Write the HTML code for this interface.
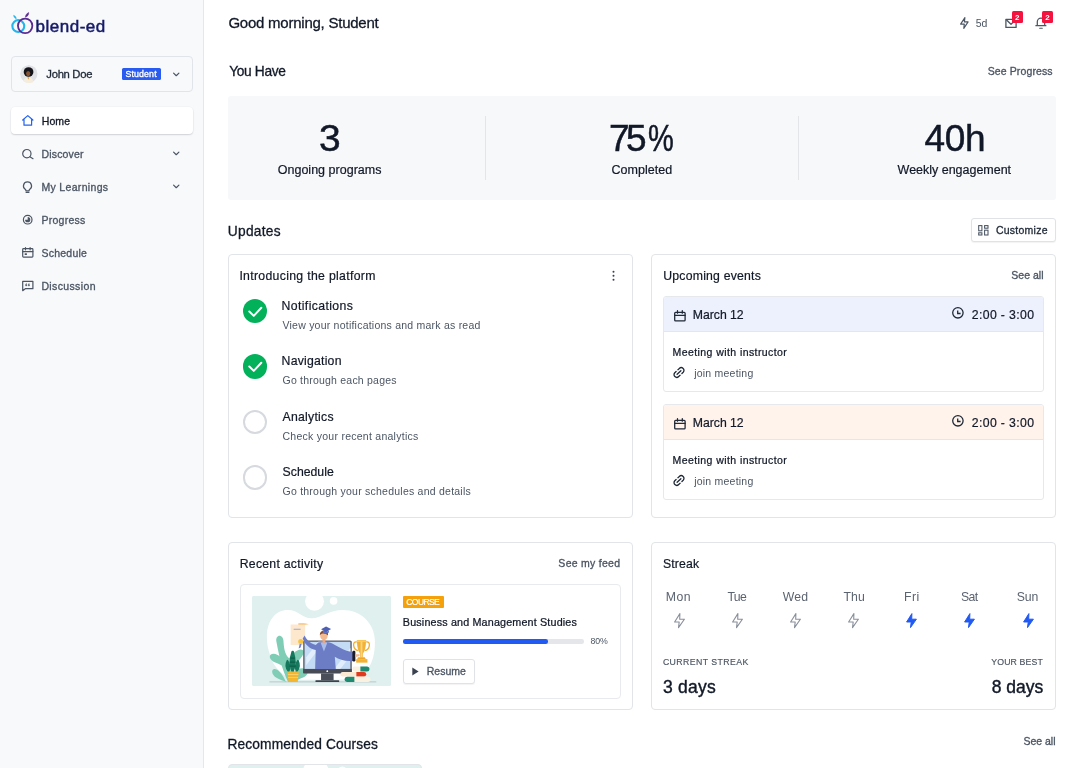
<!DOCTYPE html>
<html lang="en">
<head>
<meta charset="utf-8">
<title>blend-ed – Home</title>
<style>
*{box-sizing:border-box;margin:0;padding:0}
html,body{width:1080px;height:768px;overflow:hidden;background:#fff}
body{font-family:"Liberation Sans",Arial,sans-serif;color:#111827;position:relative;font-weight:400;will-change:transform}
a{color:inherit;text-decoration:none}
h1,h2,h3{font-weight:400;font-size:inherit}
svg{display:block;overflow:visible}
.abs{position:absolute}
.t{position:absolute;white-space:nowrap;line-height:1;display:block}
.md{-webkit-text-stroke:.32px currentColor}
.md2{-webkit-text-stroke:.2px currentColor}
.g6{color:#4b5563}
.g5{color:#5b6370}
/* ---------- sidebar ---------- */
#sidebar{position:absolute;left:0;top:0;width:204px;height:768px;background:#f8f9fb;border-right:1px solid #e5e7eb}
#logo{position:absolute;left:0;top:0;width:204px;height:46px}
#user{position:absolute;left:11px;top:56px;width:182px;height:36px;border:1px solid #e1e4e8;border-radius:4px}
#user .role{position:absolute;left:110.300px;top:11.300px;width:38.900px;height:11.900px;background:#2a5bf0;border-radius:1.500px}
nav .item{position:absolute;left:11px;width:182px;height:27px;border-radius:4px;color:#4b5563}
nav .item.active{background:#fff;color:#111827;box-shadow:0 1px 1.500px rgba(16,24,40,.16),0 0 0 .5px rgba(16,24,40,.03)}
/* ---------- main ---------- */
#main{position:absolute;left:204px;top:0;width:876px;height:768px}
#top{position:absolute;left:0;top:0;width:876px;height:46px}
.badge{position:absolute;width:11.200px;height:12px;background:#f4123f;border-radius:1.500px;color:#fff;font-weight:700}
#stats{position:absolute;left:24px;top:96px;width:828px;height:104px;background:#f7f8fa;border-radius:3px}
#stats .div{position:absolute;top:20px;width:1px;height:64px;background:#e3e5e9}
.btn{position:absolute;border:1px solid #dfe2e6;border-radius:3px;background:#fff;box-shadow:0 1px 1px rgba(16,24,40,.05)}
.card{position:absolute;border:1px solid #e1e4e8;border-radius:4px;background:#fff}
.dot{position:absolute;width:24.500px;height:24.500px;border-radius:50%}
.dot.on{background:#03b15a}
.dot.off{background:#fff;border:2px solid #d6d9de}
.ev{position:absolute;left:11px;width:381px;border:1px solid #e6e8ec;border-radius:3px;background:#fff;overflow:hidden}
.ev .hd{position:absolute;left:0;top:0;right:0;height:35px;border-bottom:1px solid #e3e6ea}
#recent .inner{position:absolute;left:11px;top:41px;width:381px;height:115px;border:1px solid #e8eaed;border-radius:4px;background:#fff}
#recent .thumb{position:absolute;left:11px;top:11px;width:139px;height:90px;border-radius:2px;overflow:hidden;background:#dff0ef}
#recent .tag{position:absolute;left:161.500px;top:11px;width:41.500px;height:12px;background:#f5a10b;border-radius:1px;color:#fff}
#recent .bar{position:absolute;left:161.500px;top:54px;width:181.500px;height:4.500px;border-radius:2.250px;background:#e4e6ea}
#recent .bar i{display:block;width:145.500px;height:4.500px;border-radius:2.250px;background:#2159f3}
</style>
</head>
<body>
<aside id="sidebar">
  <div id="logo">
    <svg class="abs" style="left:0;top:0" width="204" height="46" viewBox="0 0 204 46">
      <circle cx="18.300" cy="26.100" r="5.950" fill="none" stroke="#23b5ee" stroke-width="2.100"/>
      <ellipse cx="25.150" cy="25.850" rx="7.200" ry="7.300" fill="none" stroke="#5a2b93" stroke-width="1.800"/>
      <path d="M25.400 17.200C25.600 14.900 26.900 13.300 28.700 12.500C28.900 14.700 27.700 16.500 25.400 17.200Z" fill="#5a2b93" stroke="#5a2b93" stroke-width=".5" stroke-linejoin="round"/>
      <path d="M16.300 18.900C14.700 18.400 13.700 17.100 13.500 15.300C15.300 15.600 16.300 16.900 16.300 18.900Z" fill="#23b5ee" stroke="#23b5ee" stroke-width=".4" stroke-linejoin="round"/>
      <text id="t_logo" x="35.600" y="31.500" font-family="Liberation Sans, Arial, sans-serif" font-size="17" letter-spacing=".5" fill="#151b6b" stroke="#151b6b" stroke-width=".5">blend-ed</text>
    </svg>
  </div>
  <div id="user">
    <div class="abs" style="left:8.300px;top:8.300px;width:17.500px;height:17.500px;border-radius:50%;overflow:hidden"><svg width="17.500" height="17.500" viewBox="0 0 18 18"><circle cx="9" cy="9" r="9" fill="#e1e2e6"/><circle cx="8.800" cy="7.200" r="5" fill="#14141a"/><ellipse cx="8.400" cy="8.800" rx="2.200" ry="2.700" fill="#8a5230"/><path d="M3.200 18.500c.3-4.300 2.500-6 5.400-6s5.100 1.700 5.400 6z" fill="#f4ecdc"/><path d="M7.500 12.600h2l-.8 2.600z" fill="#e39a43"/></svg></div>
    <span class="t md" id="t_john" style="left:34.36px;top:12.00px;font-size:11.25px;letter-spacing:-0.303px;color:#1f2937">John Doe</span>
    <div class="role"></div>
    <span class="t md" id="t_role" style="left:113.46px;top:13.00px;font-size:8.75px;letter-spacing:0.158px;color:#fff">Student</span>
    <svg class="abs" style="left:158px;top:12px" width="14" height="10" viewBox="0 0 14 10"><path d="M3.600 4.100L6.250 6.700L8.900 4.100" fill="none" stroke="#4b5563" stroke-width="1.200" stroke-linecap="round" stroke-linejoin="round"/></svg>
  </div>
  <nav>
    <div class="item active" style="top:107px">
      <svg class="abs" style="left:10px;top:7px" width="14" height="14" viewBox="0 0 14 14"><path d="M1.700 6L6.800 1.600L11.900 6M3 5V11.200H10.600V5" fill="none" stroke="#2563eb" stroke-width="1.200" stroke-linecap="round" stroke-linejoin="round"/></svg>
      <span class="t md" id="t_nav1" style="left:30.86px;top:9.01px;font-size:10.5px;letter-spacing:0.037px">Home</span>
    </div>
    <div class="item" style="top:140px">
      <svg class="abs" style="left:10px;top:7px" width="14" height="14" viewBox="0 0 14 14"><circle cx="5.850" cy="6.650" r="4.150" fill="none" stroke="#4b5563" stroke-width="1.200"/><path d="M8.900 9.700L12 11.700" stroke="#4b5563" stroke-width="1.200" stroke-linecap="round"/></svg>
      <span class="t md" id="t_nav2" style="left:30.41px;top:9.01px;font-size:10.5px;letter-spacing:0.191px">Discover</span>
      <svg class="abs" style="left:158.700px;top:9px" width="14" height="10" viewBox="0 0 14 10"><path d="M3.600 3.100L6.250 5.700L8.900 3.100" fill="none" stroke="#4b5563" stroke-width="1.200" stroke-linecap="round" stroke-linejoin="round"/></svg>
    </div>
    <div class="item" style="top:173px">
      <svg class="abs" style="left:10px;top:7px" width="14" height="14" viewBox="0 0 14 14"><path d="M6.500 1.900a4 4 0 0 0-2.300 7.300c.45.350.7.800.7 1.300v.3h3.200v-.3c0-.5.250-.950.700-1.300A4 4 0 0 0 6.500 1.900z" fill="none" stroke="#4b5563" stroke-width="1.200" stroke-linejoin="round"/><path d="M5.100 12.300h2.800" stroke="#4b5563" stroke-width="1.300" stroke-linecap="round"/></svg>
      <span class="t md" id="t_nav3" style="left:30.41px;top:9.01px;font-size:10.5px;letter-spacing:0.332px">My Learnings</span>
      <svg class="abs" style="left:158.700px;top:9px" width="14" height="10" viewBox="0 0 14 10"><path d="M3.600 3.100L6.250 5.700L8.900 3.100" fill="none" stroke="#4b5563" stroke-width="1.200" stroke-linecap="round" stroke-linejoin="round"/></svg>
    </div>
    <div class="item" style="top:206px">
      <svg class="abs" style="left:10px;top:7px" width="14" height="14" viewBox="0 0 14 14"><circle cx="6.700" cy="6.700" r="4.300" fill="none" stroke="#4b5563" stroke-width="1.200"/><path d="M6.700 4.100V6.700H4.100A2.600 2.600 0 1 0 6.700 4.100z" fill="#4b5563"/></svg>
      <span class="t md" id="t_nav4" style="left:30.41px;top:9.01px;font-size:10.5px;letter-spacing:0.274px">Progress</span>
    </div>
    <div class="item" style="top:239px">
      <svg class="abs" style="left:10px;top:7px" width="14" height="14" viewBox="0 0 14 14"><rect x="1.700" y="2.700" width="10.200" height="8.400" rx=".8" fill="none" stroke="#4b5563" stroke-width="1.200"/><path d="M1.700 5.600h10.200M4.500 1.500v2.300M9.100 1.500v2.300" stroke="#4b5563" stroke-width="1.200" stroke-linecap="round"/><rect x="3.700" y="7.300" width="2.200" height="1.700" fill="#4b5563"/></svg>
      <span class="t md" id="t_nav5" style="left:30.41px;top:9.01px;font-size:10.5px;letter-spacing:0.248px">Schedule</span>
    </div>
    <div class="item" style="top:272px">
      <svg class="abs" style="left:10px;top:7px" width="14" height="14" viewBox="0 0 14 14"><path d="M1.700 2.300H11.900V9.700H4.300L1.700 11.700Z" fill="none" stroke="#4b5563" stroke-width="1.200" stroke-linejoin="round"/><path d="M4.600 7V5.600q0-.9.9-1.200v.7q-.3.200-.3.500h.6V7zM7.300 7V5.600q0-.9.900-1.200v.7q-.3.200-.3.500h.6V7z" fill="#4b5563" stroke="#4b5563" stroke-width=".3"/></svg>
      <span class="t md" id="t_nav6" style="left:30.41px;top:9.01px;font-size:10.5px;letter-spacing:0.367px">Discussion</span>
    </div>
  </nav>
</aside>
<main id="main">
  <header id="top">
    <h1 class="t md" id="t_hello" style="left:24.45px;top:15.01px;font-size:15px;letter-spacing:-0.242px;-webkit-text-stroke-width:.3px">Good morning, Student</h1>
    <svg class="abs" style="left:756.200px;top:17.300px" width="8.700" height="12" viewBox="0 0 8.700 12"><path d="M4.900 .6L.6 7.100H4.300L3.800 11.400L8.100 4.900H4.400Z" fill="none" stroke="#4b5563" stroke-width="1.150" stroke-linejoin="round"/></svg>
    <span class="t g6" id="t_5d" style="left:771.80px;top:18.00px;font-size:10.5px;letter-spacing:-0.240px">5d</span>
    <svg class="abs" style="left:801px;top:17.600px" width="13" height="11" viewBox="0 0 13 11"><path d="M.9 1.350H11.100V9.450H.9Z" fill="none" stroke="#4b5563" stroke-width="1.300" stroke-linejoin="round"/><path d="M1.300 1.700L6 6.200L10.800 1.700" fill="none" stroke="#4b5563" stroke-width="1.300" stroke-linejoin="round"/></svg>
    <span class="badge" style="left:807.900px;top:11px"></span>
    <span class="t" id="t_b1" style="left:811.10px;top:14.01px;font-size:8px;letter-spacing:0.000px;color:#fff;font-weight:700">2</span>
    <svg class="abs" style="left:831px;top:16.400px" width="12" height="13.500" viewBox="0 0 12 13.500"><path d="M.9 9.700H10.900M2.300 9.500V5.700A3.700 3.700 0 0 1 9.700 5.700V9.500" fill="none" stroke="#4b5563" stroke-width="1.250" stroke-linecap="round" stroke-linejoin="round"/><path d="M4.700 12.300H7.300" stroke="#4b5563" stroke-width="1.100" stroke-linecap="round"/></svg>
    <span class="badge" style="left:837.950px;top:11px"></span>
    <span class="t" id="t_b2" style="left:841.20px;top:14.01px;font-size:8px;letter-spacing:0.000px;color:#fff;font-weight:700">2</span>
  </header>

  <h2 class="t md" id="t_youhave" style="left:25.15px;top:65.00px;font-size:13.75px;letter-spacing:-0.325px;-webkit-text-stroke-width:.3px">You Have</h2>
  <a class="t md g6" id="t_seeprog" style="left:783.66px;top:66.00px;font-size:10.5px;letter-spacing:0.120px">See Progress</a>

  <section id="stats">
    <div class="t md" id="t_s1n" style="left:91.21px;top:24.00px;font-size:37px;letter-spacing:0.000px;transform:scaleX(1.0541);transform-origin:0 0;-webkit-text-stroke-width:.5px">3</div>
    <div class="t md2" id="t_s1l" style="left:49.70px;top:68.01px;font-size:12.5px;letter-spacing:0.021px">Ongoing programs</div>
    <div class="div" style="left:257px"></div>
    <div class="t md" id="t_s2n" style="left:380.95px;top:24.00px;font-size:37px;letter-spacing:-3.478px;-webkit-text-stroke-width:.5px">75<span id="t_s2p" style="transform:scaleX(0.7841);transform-origin:0 50%;margin-left:4.57px;margin-right:-7.12px;display:inline-block;letter-spacing:0">%</span></div>
    <div class="t md2" id="t_s2l" style="left:383.40px;top:68.00px;font-size:12.5px;letter-spacing:0.038px">Completed</div>
    <div class="div" style="left:570px"></div>
    <div class="t md" id="t_s3n" style="left:696.45px;top:24.00px;font-size:37px;letter-spacing:-0.278px;-webkit-text-stroke-width:.5px">40h</div>
    <div class="t md2" id="t_s3l" style="left:669.60px;top:68.00px;font-size:12.5px;letter-spacing:-0.016px">Weekly engagement</div>
  </section>

  <h2 class="t md" id="t_updates" style="left:23.85px;top:225.00px;font-size:13.75px;letter-spacing:0.244px;-webkit-text-stroke-width:.3px">Updates</h2>
  <div class="btn" id="customize" style="left:767px;top:218px;width:85px;height:24px">
    <svg class="abs" style="left:6px;top:6.300px" width="11" height="11" viewBox="0 0 11 11"><g fill="none" stroke="#4b5563" stroke-width="1.050"><rect x=".7" y=".6" width="3.200" height="5.200"/><rect x="6.600" y=".6" width="3.400" height="2.600"/><rect x=".7" y="7.800" width="3.200" height="2.200"/><rect x="6.600" y="5.200" width="3.400" height="4.800"/></g></svg>
    <span class="t md" id="t_custom" style="left:23.96px;top:6.01px;font-size:10.5px;letter-spacing:0.240px;color:#1f2937">Customize</span>
  </div>

  <section class="card" id="intro" style="left:24px;top:254px;width:405px;height:264px">
    <h3 class="t md2" id="t_intro" style="left:10.40px;top:15.00px;font-size:12.25px;letter-spacing:0.318px">Introducing the platform</h3>
    <svg class="abs" style="left:382px;top:14.550px" width="6" height="12" viewBox="0 0 6 12"><circle cx="2.500" cy="1.700" r="1" fill="#374151"/><circle cx="2.500" cy="5.700" r="1" fill="#374151"/><circle cx="2.500" cy="9.700" r="1" fill="#374151"/></svg>
    <div class="dot on" style="left:13.750px;top:43.750px"><svg width="24.500" height="24.500" viewBox="0 0 24.500 24.500"><path d="M6.300 12.500L10.750 16.900L18.300 8.800" fill="none" stroke="#fff" stroke-width="2" stroke-linecap="round" stroke-linejoin="round"/></svg></div>
    <div class="t md2" id="t_st1" style="left:52.60px;top:45.01px;font-size:12.25px;letter-spacing:0.371px">Notifications</div>
    <div class="t g6" id="t_sd1" style="left:53.50px;top:65.00px;font-size:10.5px;letter-spacing:0.229px">View your notifications and mark as read</div>
    <div class="dot on" style="left:13.750px;top:99.350px"><svg width="24.500" height="24.500" viewBox="0 0 24.500 24.500"><path d="M6.300 12.500L10.750 16.900L18.300 8.800" fill="none" stroke="#fff" stroke-width="2" stroke-linecap="round" stroke-linejoin="round"/></svg></div>
    <div class="t md2" id="t_st2" style="left:52.60px;top:100.01px;font-size:12.25px;letter-spacing:0.220px">Navigation</div>
    <div class="t g6" id="t_sd2" style="left:53.50px;top:120.01px;font-size:10.5px;letter-spacing:0.213px">Go through each pages</div>
    <div class="dot off" style="left:13.750px;top:154.850px"></div>
    <div class="t md2" id="t_st3" style="left:53.60px;top:156.01px;font-size:12.25px;letter-spacing:0.238px">Analytics</div>
    <div class="t g6" id="t_sd3" style="left:53.50px;top:176.01px;font-size:10.5px;letter-spacing:0.261px">Check your recent analytics</div>
    <div class="dot off" style="left:13.750px;top:210.350px"></div>
    <div class="t md2" id="t_st4" style="left:53.60px;top:211.00px;font-size:12.25px;letter-spacing:0.004px">Schedule</div>
    <div class="t g6" id="t_sd4" style="left:53.50px;top:231.01px;font-size:10.5px;letter-spacing:0.235px">Go through your schedules and details</div>
  </section>

  <section class="card" id="events" style="left:447px;top:254px;width:405px;height:264px">
    <h3 class="t md2" id="t_events" style="left:11.30px;top:15.00px;font-size:12.25px;letter-spacing:0.206px">Upcoming events</h3>
    <a class="t md g6" id="t_seeall1" style="left:359.36px;top:15.00px;font-size:10.5px;letter-spacing:0.001px">See all</a>
    <div class="ev" style="top:41px;height:96px">
      <div class="hd" style="background:#edf0fd"></div>
      <svg class="abs" style="left:9.500px;top:12.700px" width="12" height="12" viewBox="0 0 12 12"><rect x=".7" y="2.300" width="10.400" height="8.500" rx=".9" fill="none" stroke="#1f2937" stroke-width="1.300"/><path d="M.7 5.400h10.400M3.500 .7v2.500M8.300 .7v2.500" stroke="#1f2937" stroke-width="1.300" stroke-linecap="round"/></svg>
      <div class="t md2" id="t_e1d" style="left:28.85px;top:12.01px;font-size:12.25px;letter-spacing:-0.043px">March 12</div>
      <svg class="abs" style="left:288px;top:9.800px" width="12" height="12" viewBox="0 0 12 12"><circle cx="5.900" cy="5.800" r="5.200" fill="none" stroke="#1f2937" stroke-width="1.300"/><path d="M5.700 3.400V6.500H8.600" fill="none" stroke="#1f2937" stroke-width="1.300" stroke-linecap="butt" stroke-linejoin="miter"/></svg>
      <div class="t md2" id="t_e1t" style="left:307.80px;top:12.01px;font-size:12.25px;letter-spacing:0.364px">2:00 - 3:00</div>
      <div class="t md" id="t_e1m" style="left:8.52px;top:50.01px;font-size:10.5px;letter-spacing:0.423px;-webkit-text-stroke-width:.24px">Meeting with instructor</div>
      <svg class="abs" style="left:8.900px;top:69.900px" width="12" height="11" viewBox="0 0 12 11"><g fill="none" stroke="#1f2937" stroke-width="1.300" stroke-linecap="round"><path d="M4.900 2.700L6.300 1.500A2.700 2.700 0 0 1 10.200 5.300L8.900 6.500"/><path d="M7.100 8.300L5.700 9.500A2.700 2.700 0 0 1 1.800 5.700L3.100 4.500"/><path d="M4.100 7.300L7.900 3.700"/></g></svg>
      <a class="t g6" id="t_e1j" style="left:30.20px;top:71.01px;font-size:10.5px;letter-spacing:0.220px">join meeting</a>
    </div>
    <div class="ev" style="top:149.300px;height:96px">
      <div class="hd" style="background:#fff3ec"></div>
      <svg class="abs" style="left:9.500px;top:12.700px" width="12" height="12" viewBox="0 0 12 12"><rect x=".7" y="2.300" width="10.400" height="8.500" rx=".9" fill="none" stroke="#1f2937" stroke-width="1.300"/><path d="M.7 5.400h10.400M3.500 .7v2.500M8.300 .7v2.500" stroke="#1f2937" stroke-width="1.300" stroke-linecap="round"/></svg>
      <div class="t md2" id="t_e2d" style="left:28.85px;top:11.71px;font-size:12.25px;letter-spacing:-0.043px">March 12</div>
      <svg class="abs" style="left:288px;top:9.800px" width="12" height="12" viewBox="0 0 12 12"><circle cx="5.900" cy="5.800" r="5.200" fill="none" stroke="#1f2937" stroke-width="1.300"/><path d="M5.700 3.400V6.500H8.600" fill="none" stroke="#1f2937" stroke-width="1.300" stroke-linecap="butt" stroke-linejoin="miter"/></svg>
      <div class="t md2" id="t_e2t" style="left:307.80px;top:11.71px;font-size:12.25px;letter-spacing:0.364px">2:00 - 3:00</div>
      <div class="t md" id="t_e2m" style="left:8.52px;top:49.71px;font-size:10.5px;letter-spacing:0.423px;-webkit-text-stroke-width:.24px">Meeting with instructor</div>
      <svg class="abs" style="left:8.900px;top:69.900px" width="12" height="11" viewBox="0 0 12 11"><g fill="none" stroke="#1f2937" stroke-width="1.300" stroke-linecap="round"><path d="M4.900 2.700L6.300 1.500A2.700 2.700 0 0 1 10.200 5.300L8.900 6.500"/><path d="M7.100 8.300L5.700 9.500A2.700 2.700 0 0 1 1.800 5.700L3.100 4.500"/><path d="M4.100 7.300L7.900 3.700"/></g></svg>
      <a class="t g6" id="t_e2j" style="left:30.20px;top:70.71px;font-size:10.5px;letter-spacing:0.220px">join meeting</a>
    </div>
  </section>

  <section class="card" id="recent" style="left:24px;top:542px;width:405px;height:168px">
    <h3 class="t md2" id="t_recent" style="left:10.70px;top:15.01px;font-size:12.25px;letter-spacing:0.269px">Recent activity</h3>
    <a class="t md g6" id="t_feed" style="left:329.36px;top:15.01px;font-size:10.5px;letter-spacing:0.267px">See my feed</a>
    <div class="inner">
      <div class="thumb"><svg width="139" height="90" viewBox="0 0 138.500 89.800" preserveAspectRatio="none">
  <rect width="138.500" height="89.800" fill="#dff0ef"/>
  <circle cx="62.300" cy="5.300" r="9.400" fill="#fff"/>
  <circle cx="81.300" cy="4.900" r="3.800" fill="#fff"/>
  <path d="M14.800 41C14.800 24 24 14 35.500 14C47 14 50 22.500 59.500 22.300C69 22.100 77 14 90.500 14C108 14 122.500 27 122.500 45.500C122.500 58 120 66 116 72C110 80 100 83.500 85 83.500L50 83.500C35 83.500 24 75 19 62C16 54 14.800 48 14.800 41Z" fill="#fff"/>
  <!-- light leaves -->
  <g fill="#80cdb6">
    <path d="M36 85.700C30 74 27 60 24.300 45.500C23.500 41.500 26 39 28.500 40C31 41 31.500 44 31.500 47C32 55 34 60 37 62C40 58 44 54 48.500 53.500C52 53.500 52.500 57 50 60C46 65 42 70 41.500 76C45 73 50 71 54 73C57 75 55.500 79 51.500 81C47 83 44 84 42 85.700Z"/>
    <path d="M30 62C26 58 21 56.500 18.500 58.500C16.500 60.500 18.500 64 22.500 66C27 68 31 69 33 72Z"/>
    <path d="M33 84C30 77 25 72 21.500 73C19 74 20 78.500 23.500 81C27 83.500 31 84.500 34 85.700Z"/>
  </g>
  <!-- ground -->
  <rect x="17.300" y="85.300" width="106.500" height=".8" fill="#b9bcc4"/>
  <!-- diploma -->
  <path d="M38.500 28.500H52.900V49H38.500Z" fill="#fde8cd"/>
  <path d="M46 27.300C48 26.500 54 27 56.500 28.300C54 29.300 48 29 46 28.600Z" fill="#f8cf97"/>
  <path d="M41.500 33.200H48.500" stroke="#9aa6d6" stroke-width="1.100"/>
  <path d="M47.600 47.500L46.500 52.300L48.400 51.300L49.600 47.500Z" fill="#6f82cf"/>
  <circle cx="48.500" cy="45.300" r="2.500" fill="#f6c445"/>
  <!-- monitor -->
  <rect x="51" y="44.300" width="48.400" height="32.900" rx="1.600" fill="#5a5f6b"/>
  <rect x="52.400" y="45.700" width="45.600" height="27.100" fill="#c3dbf5"/>
  <path d="M54 61L66 45.700H72L54 69Z" fill="#e2eefb"/>
  <path d="M82 72.800L98 52V60L88 72.800Z" fill="#e2eefb"/>
  <rect x="51" y="72.800" width="48.400" height="4.400" fill="#474b56"/>
  <circle cx="75" cy="75" r=".9" fill="#fff"/>
  <rect x="68.800" y="77.200" width="12.500" height="6.800" fill="#4a4e59"/>
  <rect x="63.200" y="84" width="23.700" height="1.700" rx=".5" fill="#3d414b"/>
  <!-- person -->
  <path d="M52.500 39.500C54.500 44 58 47.500 63.500 49L66 46.500C69.500 45.500 74 45.500 77.500 46.500C84 49 92 55.500 100.500 56L101 64.500C94 65.500 87 63.500 82.500 60.500L83.500 72.800H62.900L63.500 54C58 53 53 49 50.500 42.500Z" fill="#6c7dc6"/>
  <path d="M68.300 46.500L71.700 55.500L75.100 46.500C73 46 70.500 46 68.300 46.500Z" fill="#a9bdea"/>
  <rect x="70.300" y="42.500" width="2.800" height="4.200" fill="#eaa67e"/>
  <circle cx="71.650" cy="40" r="3.700" fill="#f3b990"/>
  <path d="M67.700 39.500C67.300 36 69.500 34.500 72 34.500C74.500 34.500 76.300 36.300 75.700 39.500C74.500 38 72.500 37.300 70.500 37.500C69 37.700 68.200 38.500 67.700 39.500Z" fill="#8b4a2b"/>
  <path d="M68.800 33.200L73.800 30.500L78.800 33L73.900 36Z" fill="#4d5fb3"/>
  <path d="M70.600 34.300V36.700C72.500 38 75 37.800 76.600 36.500V34.300L73.900 36Z" fill="#5d70c4"/>
  <rect x="100" y="54.700" width="3" height="10.600" rx="1.200" fill="#1c1c26"/>
  <path d="M103 58H106.500C107.600 58 107.800 59.300 106.800 59.800L103 61.200Z" fill="#f3b990"/>
  <!-- trophy -->
  <g>
    <path d="M104.400 45.900C102 45.500 101 47 101.300 49.500C101.700 52.500 103.500 54 106 54.500" fill="none" stroke="#f0ad2f" stroke-width="1.300"/>
    <path d="M113.800 45.900C116.200 45.500 117.200 47 116.900 49.500C116.500 52.500 114.700 54 112.200 54.500" fill="none" stroke="#f0ad2f" stroke-width="1.300"/>
    <path d="M104.400 44H113.800V45.600H104.400Z" fill="#f7c455"/>
    <path d="M104.600 45.600H113.600C113.600 51.500 112 55.500 110.500 57.500V61H107.700V57.500C106.200 55.500 104.600 51.500 104.600 45.600Z" fill="#f2b236"/>
    <path d="M108.200 45.600H110V61H108.200Z" fill="#f9d584"/>
    <path d="M105.800 61H112.400L113.500 63H104.700Z" fill="#eea92a"/>
    <rect x="103.800" y="63" width="11.200" height="3.500" fill="#f2b236"/>
  </g>
  <!-- books -->
  <rect x="100" y="70.300" width="16.900" height="5" rx="2.400" fill="#fbf1e1"/>
  <path d="M108 70.300H114.500A2.500 2.500 0 0 1 114.500 75.300H108Z" fill="#1f8a70"/>
  <rect x="88.100" y="75.900" width="25.700" height="4.400" rx="2.200" fill="#fbe9d3"/>
  <path d="M104 75.900H111.600A2.200 2.200 0 0 1 111.600 80.300H104Z" fill="#df3a1d"/>
  <rect x="92.500" y="80.500" width="25.600" height="5.200" rx="2.400" fill="#fbf1e1"/>
  <path d="M102 80.500H94.900A2.600 2.600 0 0 0 94.900 85.700H102Z" fill="#1f8a70"/>
  <!-- cactus + pot -->
  <g fill="#14785d">
    <path d="M40.500 75.500C38.500 70 38.500 62 40.500 55.900C42.500 62 42.500 70 40.500 75.500Z" stroke="#14785d" stroke-width="2.600" stroke-linejoin="round"/>
    <path d="M36.500 75.300C34 72.500 33.500 68 35.300 64.500C37.500 67.500 38 72 36.500 75.300Z" stroke="#14785d" stroke-width="1.600" stroke-linejoin="round"/>
    <path d="M44.500 75.300C47 72.500 47.500 68 45.700 64.500C43.500 67.500 43 72 44.500 75.300Z" stroke="#14785d" stroke-width="1.600" stroke-linejoin="round"/>
  </g>
  <path d="M38.300 62H42.700M37.500 66H43.500M37.300 70H43.700" stroke="#0d4f3f" stroke-width=".8"/>
  <path d="M35.400 75.300H46.600L45.600 85.700H36.400Z" fill="#f4b52f"/>
  <path d="M35.700 78.300H46.300M36 81.300H46" stroke="#f9d46f" stroke-width=".9"/>
</svg></div>
      <div class="tag"></div>
      <span class="t md" id="t_tag" style="left:165.30px;top:13.01px;font-size:8.5px;letter-spacing:-0.579px;color:#fff;-webkit-text-stroke-width:.2px">COURSE</span>
      <div class="t md" id="t_course" style="left:161.82px;top:32.00px;font-size:10.75px;letter-spacing:0.164px;-webkit-text-stroke-width:.24px">Business and Management Studies</div>
      <div class="bar"><i></i></div>
      <div class="t g6" id="t_pct" style="left:349.50px;top:52.01px;font-size:8.75px;letter-spacing:-0.116px">80%</div>
      <div class="btn" style="left:161.500px;top:74px;width:72px;height:24.500px">
        <svg class="abs" style="left:8.400px;top:7.200px" width="7" height="9" viewBox="0 0 7 9"><path d="M.3 .4V8.400L6.600 4.400Z" fill="#3a4250"/></svg>
        <span class="t md g6" id="t_resume" style="left:23.16px;top:6.00px;font-size:10.5px;letter-spacing:0.024px">Resume</span>
      </div>
    </div>
  </section>

  <section class="card" id="streak" style="left:447px;top:542px;width:405px;height:168px">
    <h3 class="t md2" id="t_streak" style="left:10.90px;top:15.01px;font-size:12.25px;letter-spacing:0.164px">Streak</h3>
    <div class="t g5" id="t_d1" style="left:13.80px;top:48.01px;font-size:12.25px;letter-spacing:0.441px">Mon</div>
    <svg class="abs" style="left:21.70px;top:69.500px" width="11" height="15.200" viewBox="0 0 11 15.200"><path d="M5.900 .6L.6 9H5.200L4.500 14.600L10.400 6.200H5.700Z" fill="none" stroke="#8a909b" stroke-width="1.100" stroke-linejoin="round"/></svg>
    <div class="t g5" id="t_d2" style="left:75.50px;top:48.01px;font-size:12.25px;letter-spacing:-0.721px">Tue</div>
    <svg class="abs" style="left:79.85px;top:69.500px" width="11" height="15.200" viewBox="0 0 11 15.200"><path d="M5.900 .6L.6 9H5.200L4.500 14.600L10.400 6.200H5.700Z" fill="none" stroke="#8a909b" stroke-width="1.100" stroke-linejoin="round"/></svg>
    <div class="t g5" id="t_d3" style="left:130.80px;top:48.01px;font-size:12.25px;letter-spacing:0.173px">Wed</div>
    <svg class="abs" style="left:138.00px;top:69.500px" width="11" height="15.200" viewBox="0 0 11 15.200"><path d="M5.900 .6L.6 9H5.200L4.500 14.600L10.400 6.200H5.700Z" fill="none" stroke="#8a909b" stroke-width="1.100" stroke-linejoin="round"/></svg>
    <div class="t g5" id="t_d4" style="left:191.60px;top:48.01px;font-size:12.25px;letter-spacing:0.002px">Thu</div>
    <svg class="abs" style="left:196.15px;top:69.500px" width="11" height="15.200" viewBox="0 0 11 15.200"><path d="M5.900 .6L.6 9H5.200L4.500 14.600L10.400 6.200H5.700Z" fill="none" stroke="#8a909b" stroke-width="1.100" stroke-linejoin="round"/></svg>
    <div class="t g5" id="t_d5" style="left:251.90px;top:48.01px;font-size:12.25px;letter-spacing:0.569px">Fri</div>
    <svg class="abs" style="left:254.30px;top:69.500px" width="11" height="15.200" viewBox="0 0 11 15.200"><path d="M5.900 .6L.6 9H5.200L4.500 14.600L10.400 6.200H5.700Z" fill="#2159f3" stroke="#2159f3" stroke-width="1" stroke-linejoin="round"/></svg>
    <div class="t g5" id="t_d6" style="left:309.10px;top:48.01px;font-size:12.25px;letter-spacing:-0.642px">Sat</div>
    <svg class="abs" style="left:312.45px;top:69.500px" width="11" height="15.200" viewBox="0 0 11 15.200"><path d="M5.900 .6L.6 9H5.200L4.500 14.600L10.400 6.200H5.700Z" fill="#2159f3" stroke="#2159f3" stroke-width="1" stroke-linejoin="round"/></svg>
    <div class="t g5" id="t_d7" style="left:364.70px;top:48.01px;font-size:12.25px;letter-spacing:-0.092px">Sun</div>
    <svg class="abs" style="left:370.60px;top:69.500px" width="11" height="15.200" viewBox="0 0 11 15.200"><path d="M5.900 .6L.6 9H5.200L4.500 14.600L10.400 6.200H5.700Z" fill="#2159f3" stroke="#2159f3" stroke-width="1" stroke-linejoin="round"/></svg>
    <div class="t md g6" id="t_cur" style="left:10.88px;top:115.01px;font-size:8.75px;letter-spacing:0.421px;-webkit-text-stroke-width:.15px">CURRENT STREAK</div>
    <div class="t md g6" id="t_best" style="left:339.28px;top:115.01px;font-size:8.75px;letter-spacing:0.129px;-webkit-text-stroke-width:.15px">YOUR BEST</div>
    <div class="t md" id="t_3d" style="left:11.00px;top:136.01px;font-size:17.5px;letter-spacing:0.258px;-webkit-text-stroke-width:.4px">3 days</div>
    <div class="t md" id="t_8d" style="left:339.80px;top:136.01px;font-size:17.5px;letter-spacing:-0.042px;-webkit-text-stroke-width:.4px">8 days</div>
  </section>

  <h2 class="t md" id="t_reco" style="left:23.55px;top:738.01px;font-size:13.75px;letter-spacing:0.117px;-webkit-text-stroke-width:.3px">Recommended Courses</h2>
  <a class="t md g6" id="t_seeall2" style="left:819.46px;top:736.01px;font-size:10.5px;letter-spacing:-0.015px">See all</a>
  <div class="abs" id="reccard" style="left:24px;top:764px;width:193.500px;height:10px;border:1px solid #e1e4e8;border-radius:4px 4px 0 0;background:#dff0ef;overflow:hidden"><svg class="abs" style="left:0;top:0" width="193" height="10" viewBox="0 0 193 10"><circle cx="86.800" cy="7.400" r="13.100" fill="#fff"/><circle cx="113.300" cy="6.800" r="5.300" fill="#fff"/></svg></div>
</main>
</body>
</html>
